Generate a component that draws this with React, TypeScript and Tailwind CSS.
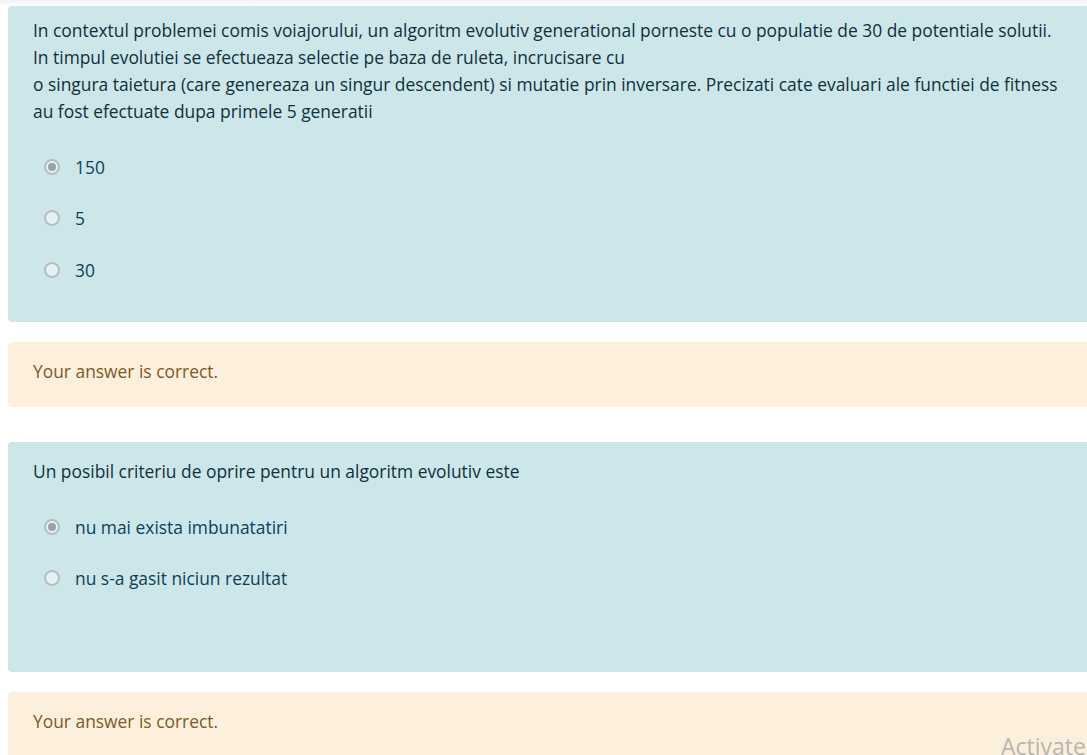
import React from "react";

type Option = { label: string; checked?: boolean };

function Radio({ checked }: { checked?: boolean }) {
  return (
    <span className="relative flex h-[16px] w-[16px] shrink-0 items-center justify-center rounded-full border-2 border-[#b7bec3] bg-[#e6f1f3]">
      {checked && <span className="h-[8px] w-[8px] rounded-full bg-[#9aa1a7]" />}
    </span>
  );
}

function Question({
  lines,
  options,
  height,
  top,
}: {
  lines: string[];
  options: Option[];
  height: string;
  top: string;
}) {
  return (
    <div className={`ml-2 rounded-[4px] bg-[#cce6ea] pl-[25px] pr-4 text-[#10303c] ${height}`}>
      <div className={top}>
        {lines.map((l) => (
          <p key={l} className="leading-[27px]">
            {l}
          </p>
        ))}
      </div>
      <div className="mt-[16px] flex flex-col">
        {options.map((o) => (
          <label key={o.label} className="flex h-[51.5px] items-center gap-[15px] pl-[11px] text-[#0e3f5a]">
            <Radio checked={o.checked} />
            <span>{o.label}</span>
          </label>
        ))}
      </div>
    </div>
  );
}

function Feedback() {
  return (
    <div className="ml-2 flex h-[65px] items-center rounded-[4px] bg-[#fcefdc] pb-[7px] pl-[25px] text-[#7d5a29]">
      Your answer is correct.
    </div>
  );
}

export default function App() {
  return (
    <div
      className="relative h-[755px] w-[1087px] overflow-hidden bg-white text-[17.4px]"
      style={{ fontFamily: '"Open Sans", "Noto Sans", sans-serif' }}
    >
      <div className="h-[6px] bg-gradient-to-b from-[#f1f3f4] to-white" />
      <div className="-mr-4 flex flex-col">
        <Question
          height="h-[316px]"
          top="pt-[11px]"
          lines={[
            "In contextul problemei comis voiajorului, un algoritm evolutiv generational porneste cu o populatie de 30 de potentiale solutii.",
            "In timpul evolutiei se efectueaza selectie pe baza de ruleta, incrucisare cu",
            "o singura taietura (care genereaza un singur descendent) si mutatie prin inversare. Precizati cate evaluari ale functiei de fitness",
            "au fost efectuate dupa primele 5 generatii",
          ]}
          options={[{ label: "150", checked: true }, { label: "5" }, { label: "30" }]}
        />
        <div className="mt-[20px]">
          <Feedback />
        </div>
        <div className="mt-[35px]">
          <Question
            height="h-[230px]"
            top="pt-[16px]"
            lines={["Un posibil criteriu de oprire pentru un algoritm evolutiv este"]}
            options={[{ label: "nu mai exista imbunatatiri", checked: true }, { label: "nu s-a gasit niciun rezultat" }]}
          />
        </div>
        <div className="mt-[20px]">
          <Feedback />
        </div>
      </div>
      <div className="absolute left-[1001px] top-[729px] text-[23px] text-[#b9b6b1]">Activate</div>
    </div>
  );
}
